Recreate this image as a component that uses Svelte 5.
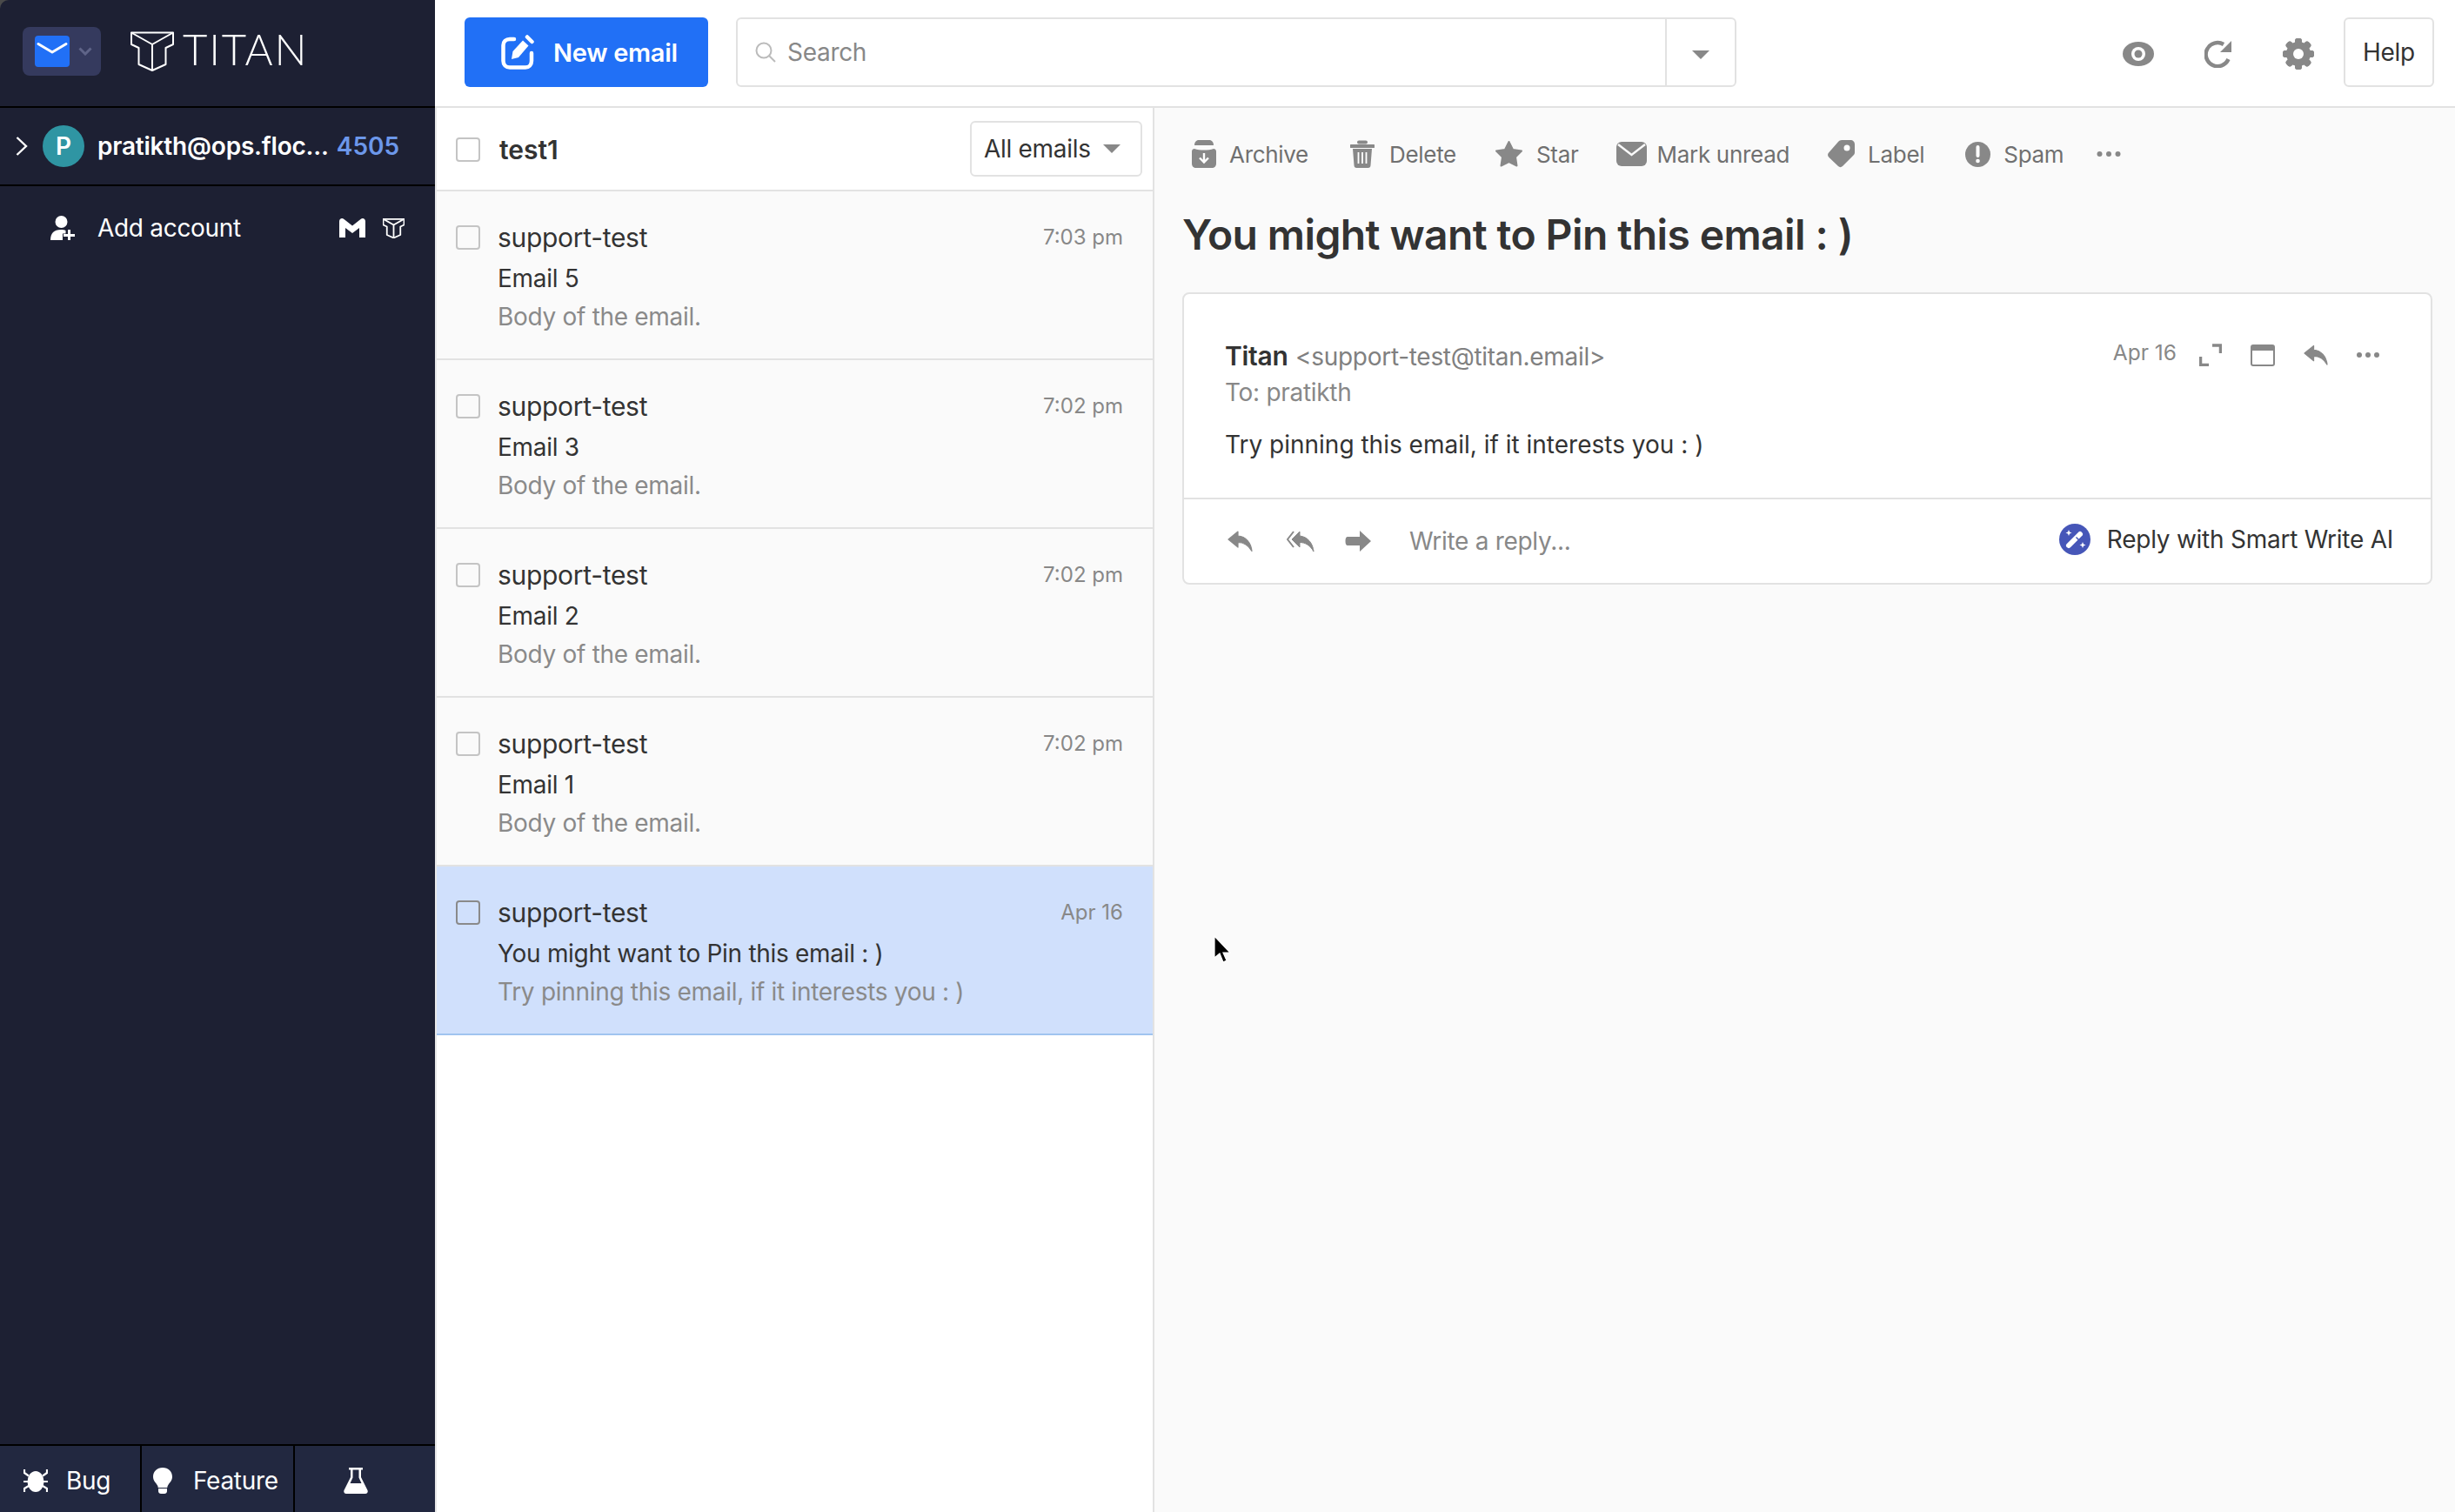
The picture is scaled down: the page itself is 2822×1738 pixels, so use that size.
<script>
  const emails = [
    { sender: 'support-test', subject: 'Email 5', body: 'Body of the email.', time: '7:03 pm' },
    { sender: 'support-test', subject: 'Email 3', body: 'Body of the email.', time: '7:02 pm' },
    { sender: 'support-test', subject: 'Email 2', body: 'Body of the email.', time: '7:02 pm' },
    { sender: 'support-test', subject: 'Email 1', body: 'Body of the email.', time: '7:02 pm' },
    { sender: 'support-test', subject: 'You might want to Pin this email : )', body: 'Try pinning this email, if it interests you : )', time: 'Apr 16', selected: true }
  ];
  const teeth = [0, 45, 90, 135, 180, 225, 270, 315];
</script>

{#snippet logo(w, h, sw)}
  <svg width={w} height={h} viewBox="0 0 50 46" fill="none" stroke="#fff" stroke-width={sw} stroke-linejoin="round">
    <path d="M1 1.5V15l8.5 4v19L25 45l15.500-7V19L49 15V1.500Z" />
    <path d="M1 1.500 25 15 49 1.500M25 15v30" />
  </svg>
{/snippet}

{#snippet reply(w, h)}
  <svg width={w} height={h} viewBox="0 0 29 24" fill="#888" stroke="#888" stroke-width="1.200" stroke-linejoin="round"><path d="M12 1 1 10l11 9v-5.500c7 0 12 3 16 10C27 14 21 6.500 12 6Z" /></svg>
{/snippet}

<div class="app">
  <aside class="sidebar">
    <div class="brand">
      <div class="switcher">
        <svg class="mailtile" width="40" height="36" viewBox="0 0 40 36"><rect width="40" height="36" rx="4" fill="#2170f6" /><path d="M4 9.500 20 19 36 9.500" fill="none" stroke="#fff" stroke-width="3" stroke-linecap="round" stroke-linejoin="round" /></svg>
        <svg width="16" height="10" viewBox="0 0 16 10"><path d="M1.500 1.500 8 8l6.500-6.500" fill="none" stroke="#5f6488" stroke-width="3" /></svg>
      </div>
      <div class="logo">
        {@render logo(50, 46, 2)}
        <span class="wordmark">TITAN</span>
      </div>
    </div>
    <div class="account">
      <svg width="14" height="22" viewBox="0 0 14 22"><path d="M1.500 1 12 11 1.500 21" fill="none" stroke="#fff" stroke-width="2.400" /></svg>
      <span class="avatar">P</span>
      <span class="address">pratikth@ops.floc...</span>
      <span class="count">4505</span>
    </div>
    <div class="add">
      <svg width="28" height="28" viewBox="0 0 28 28" fill="#fff"><circle cx="12.500" cy="7" r="7" /><path d="M0 28c0-8 4-12 12-12 2.500 0 4 .4 5.500 1v3.500H14V28Z" /><path d="M20 16h3v5h5v3h-5v4h-3v-4h-5v-3h5Z" /></svg>
      <span class="add-label">Add account</span>
      <svg width="30" height="22" viewBox="0 0 30 22"><path d="M0 3.500C0 .5 3-1 5.500 1L15 8.500 24.500 1C27-1 30 .5 30 3.500V22h-7V11l-8 6-8-6v11H0Z" fill="#fff" /></svg>
      {@render logo(25, 23, 3.600)}
    </div>
    <div class="grow"></div>
    <div class="feedback">
      <div class="fb fb-bug">
        <svg width="28" height="28" viewBox="0 0 28 28" fill="#fff"><ellipse cx="14" cy="15" rx="9.500" ry="12" /><path d="M1 1v4l5 3.500M27 1v4l-5 3.500M0 15h5M28 15h-5M1 27v-4l5-3M27 27v-4l-5-3" fill="none" stroke="#fff" stroke-width="2.200" /></svg>
        <span>Bug</span>
      </div>
      <div class="fb fb-feature">
        <svg width="22" height="30" viewBox="0 0 22 30" fill="#fff"><path d="M11 0C4.500 0 0 4.500 0 10.500 0 15 3 17 5 20.500c.5 1 .7 1.500.7 2.500h10.600c0-1 .2-1.500.7-2.500 2-3.500 5-5.500 5-10C22 4.500 17.500 0 11 0Z" /><path d="M6 24h10v3c0 2-1.500 3-3 3H9c-1.500 0-3-1-3-3Z" /></svg>
        <span>Feature</span>
      </div>
      <div class="fb fb-flask">
        <svg width="28" height="30" viewBox="0 0 28 30" fill="#fff"><path d="M6 0h16v2.500h-2V11l7.500 15c.8 2-.3 4-2.500 4H3c-2.200 0-3.300-2-2.500-4L8 11V2.500H6Zm4.500 2.500V11.500L7.500 18h13l-3-6.500v-9Z" fill-rule="evenodd" /></svg>
      </div>
    </div>
  </aside>

  <div class="main">
    <header class="topbar">
      <button class="compose">
        <svg width="40" height="40" viewBox="0 0 40 40" fill="none"><path d="M15 5H10C5.500 5 2.500 8 2.500 12v18c0 4.500 3 7.500 7.500 7.500h18c4 0 7-3 7-7.500v-9" stroke="#fff" stroke-width="4.500" stroke-linecap="round" /><path d="M12 28l1.500-9L25 6.500l6.500 6L20 26Z" fill="#fff" /><path d="M30 2.500 35.500 8" stroke="#fff" stroke-width="4.500" stroke-linecap="round" /></svg>
        <span>New email</span>
      </button>
      <div class="search">
        <svg width="24" height="24" viewBox="0 0 24 24" fill="none" stroke="#bbb" stroke-width="2"><circle cx="10" cy="10" r="8.500" /><path d="M16 16l7 7" /></svg>
        <span class="search-text">Search</span>
        <span class="search-caret"><i class="caret"></i></span>
      </div>
      <div class="tools">
        <svg class="tool" width="36" height="28" viewBox="0 0 36 28"><ellipse cx="18" cy="14" rx="18" ry="14" fill="#888" /><circle cx="18" cy="14" r="8" fill="#fff" /><circle cx="18" cy="14" r="4.500" fill="#888" /></svg>
        <svg class="tool" width="32" height="32" viewBox="0 0 32 32"><path d="M27.500 22A13.500 13.500 0 1 1 22 5" fill="none" stroke="#888" stroke-width="4.500" /><path d="M31 1v13H18Z" fill="#888" /></svg>
        <svg class="tool" width="36" height="36" viewBox="0 0 36 36"><g fill="#888">{#each teeth as t}<rect x="14" y="0" width="8" height="36" rx="3" transform="rotate({t} 18 18)" />{/each}<circle cx="18" cy="18" r="14" /></g><circle cx="18" cy="18" r="6" fill="#fff" /></svg>
        <button class="help">Help</button>
      </div>
    </header>

    <div class="content">
      <section class="list">
        <div class="list-head">
          <span class="check"></span>
          <span class="folder">test1</span>
          <button class="filter">All emails <i class="caret"></i></button>
        </div>
        {#each emails as m}
          <div class="row" class:selected={m.selected}>
            <span class="check"></span>
            <div class="row-text">
              <div class="sender">{m.sender}</div>
              <div class="subject">{m.subject}</div>
              <div class="snippet">{m.body}</div>
            </div>
            <span class="time">{m.time}</span>
          </div>
        {/each}
      </section>

      <section class="pane">
        <div class="actions">
          <span class="act act-archive">
            <svg width="28" height="32" viewBox="0 0 28 32" fill="#888"><path d="M3 6C3 2.500 5 0 8 0h12c3 0 5 2.500 5 6Z" /><path d="M0 13c0-2 1.500-3 3-3 3 1 7 1.500 11 1.500S22 11 25 10c1.500 0 3 1 3 3v14c0 3-2 5-5 5H5c-3 0-5-2-5-5Z" /><path d="M14 15v10M9 20.500l5 5 5-5" fill="none" stroke="#fff" stroke-width="2.400" /></svg>
            Archive
          </span>
          <span class="act act-delete">
            <svg width="28" height="32" viewBox="0 0 28 32" fill="#888"><path d="M10 2.500h8M1 7h26" stroke="#888" stroke-width="4" stroke-linecap="round" /><path d="M3 10h22l-1.500 19c-.1 2-1 3-3 3h-13c-2 0-2.900-1-3-3Z" /><path d="M9.500 14v13M14 14v13M18.500 14v13" stroke="#fff" stroke-width="1.800" /></svg>
            Delete
          </span>
          <span class="act act-star">
            <svg width="33" height="32" viewBox="0 0 33 32" fill="#888" stroke="#888" stroke-width="2" stroke-linejoin="round"><path d="M16.500 2 21 11l10 1.500-7 7 1.500 10-9-4.500-9 4.500L9 19.500l-7-7L12 11Z" /></svg>
            Star
          </span>
          <span class="act act-mark">
            <svg width="35" height="28" viewBox="0 0 35 28"><rect width="35" height="28" rx="6" fill="#888" /><path d="M2 3 17.500 15 33 3" fill="none" stroke="#fafafa" stroke-width="2.500" /></svg>
            Mark unread
          </span>
          <span class="act act-label">
            <svg width="31" height="32" viewBox="0 0 31 32"><path d="M16 0h10c3 0 5 2 5 5v9c0 1.500-.5 2.500-1.500 3.500L17 30c-1.500 1.500-3.500 1.500-5 0L1.500 20c-2-2-2-4 0-6L12 2c1-1.300 2.500-2 4-2Z" fill="#888" /><circle cx="22" cy="9" r="3.500" fill="#fff" /></svg>
            Label
          </span>
          <span class="act">
            <svg width="29" height="29" viewBox="0 0 29 29"><circle cx="14.500" cy="14.500" r="14.500" fill="#888" /><path d="M14.500 6v10" stroke="#fff" stroke-width="4" stroke-linecap="round" /><circle cx="14.500" cy="22" r="2.300" fill="#fff" /></svg>
            Spam
          </span>
          <svg class="more" width="28" height="8" viewBox="0 0 28 8" fill="#888"><circle cx="3.500" cy="4" r="3" /><circle cx="14" cy="4" r="3" /><circle cx="24.500" cy="4" r="3" /></svg>
        </div>

        <h1 class="title">You might want to Pin this email : )</h1>

        <article class="card">
          <div class="message">
            <div>
              <div class="from"><b>Titan</b> <span>&lt;support-test@titan.email&gt;</span></div>
              <div class="to">To: pratikth</div>
              <div class="body">Try pinning this email, if it interests you : )</div>
            </div>
            <div class="meta">
              <span class="date">Apr 16</span>
              <svg width="26" height="26" viewBox="0 0 26 26" fill="none" stroke="#888" stroke-width="3.500"><path d="M15 2h9.500v9M1.500 15v9.500H11" /></svg>
              <svg width="28" height="25" viewBox="0 0 28 25"><rect x="1" y="1" width="26" height="23" rx="2" fill="#fff" stroke="#888" stroke-width="2" /><rect x="1" y="1" width="26" height="6" fill="#888" /></svg>
              {@render reply(28, 24)}
              <svg width="26" height="8" viewBox="0 0 26 8" fill="#888"><circle cx="3" cy="4" r="3" /><circle cx="13" cy="4" r="3" /><circle cx="23" cy="4" r="3" /></svg>
            </div>
          </div>
          <div class="reply-bar">
            <span class="r-first">{@render reply(29, 24)}</span>
            <svg width="33" height="24" viewBox="0 0 33 24"><path d="M8 1 1 10l7 9" fill="none" stroke="#888" stroke-width="2" /><path d="M15 1 6 10l9 9v-5.500c6 0 12 3 16 10.500-1-10-7-17-16-18Z" fill="#888" stroke="#888" stroke-linejoin="round" /></svg>
            <svg width="31" height="26" viewBox="0 0 31 26"><path d="M17 1 30 13 17 25v-7H3c-1.500 0-2.500-1.500-2.500-5S1.500 8 3 8h14Z" fill="#888" /></svg>
            <span class="write">Write a reply...</span>
            <span class="ai">
              <svg width="36" height="36" viewBox="0 0 36 36"><circle cx="18" cy="18" r="18" fill="#4656b8" /><path d="M11 25 24 12" stroke="#fff" stroke-width="6" stroke-linecap="round" /><path d="M19.500 15.500l3 3" stroke="#4656b8" stroke-width="1.500" /><path d="M11 7l1 2.500 2.500 1-2.500 1-1 2.500-1-2.500-2.500-1 2.500-1ZM27 21l1 2.500 2.500 1-2.500 1-1 2.500-1-2.500-2.500-1 2.500-1Z" fill="#fff" /></svg>
              Reply with Smart Write AI
            </span>
          </div>
        </article>

        <svg class="cursor" width="20" height="32" viewBox="0 0 20 32"><path d="M1 1v25l6-5 4 10 4-2-4-9h8Z" fill="#000" stroke="#fff" stroke-width="1.200" /></svg>
      </section>
    </div>
  </div>
</div>

<style>
  :global(body) {
    margin: 0;
    background: #4a4a4a;
    font-family: Inter, "Liberation Sans", sans-serif;
    color: #333;
    letter-spacing: -0.3px;
  }
  button { font: inherit; color: inherit; letter-spacing: inherit; }
  .app {
    display: grid;
    grid-template-columns: 500px 1fr;
    height: 100vh;
    overflow: hidden;
  }
  .sidebar {
    display: flex;
    flex-direction: column;
    background: #1d2033;
    color: #fff;
    border-radius: 10px 0 0 10px;
    font-size: 28px;
  }
  .brand {
    height: 122px;
    box-sizing: border-box;
    display: flex;
    align-items: flex-start;
    padding: 31px 0 0 26px;
  }
  .switcher {
    width: 90px;
    height: 56px;
    border-radius: 8px;
    background: #353a5e;
    display: flex;
    align-items: center;
    box-sizing: border-box;
    padding-left: 14px;
    gap: 10px;
  }
  .logo { display: flex; margin: 5px 0 0 34px; gap: 10px; }
  .wordmark {
    font-family: Lato, sans-serif;
    font-weight: 300;
    font-size: 49px;
    line-height: 36px;
    margin-top: 2px;
    letter-spacing: 1.800px;
  }
  .account {
    height: 88px;
    border-top: 2px solid #000;
    border-bottom: 2px solid #000;
    display: flex;
    align-items: center;
    padding-left: 18px;
  }
  .avatar {
    width: 48px;
    height: 48px;
    border-radius: 50%;
    background: #2f95a3;
    display: flex;
    align-items: center;
    justify-content: center;
    font-weight: 600;
    margin-left: 17px;
  }
  .address { font-weight: 600; margin-left: 15px; white-space: nowrap; letter-spacing: -0.200px; }
  .count { font-weight: 600; color: #6c97ea; margin-left: 9px; letter-spacing: 0; }
  .add {
    display: flex;
    align-items: center;
    height: 70px;
    margin-top: 13px;
    padding-left: 58px;
  }
  .add-label { margin-left: 26px; margin-right: 113px; }
  .add svg:last-child { margin-left: 20px; }
  .grow { flex: 1; }
  .feedback {
    height: 76px;
    display: grid;
    grid-template-columns: 163px 176px 1fr;
    background: #222840;
    border-top: 2px solid #000;
  }
  .fb { display: flex; align-items: center; padding-top: 3px; }
  .fb-bug { padding-left: 27px; gap: 21px; border-right: 2px solid #000; }
  .fb-feature { padding-left: 13px; gap: 24px; border-right: 2px solid #000; }
  .fb-flask { justify-content: center; padding-right: 22px; }

  .main { display: flex; flex-direction: column; min-width: 0; background: #fff; }
  .topbar {
    height: 124px;
    box-sizing: border-box;
    flex: none;
    border-bottom: 2px solid #e2e2e2;
    display: flex;
    align-items: flex-start;
    padding: 20px 24px 0 34px;
  }
  .compose {
    width: 280px;
    height: 80px;
    border: 0;
    border-radius: 6px;
    background: #2170f6;
    color: #fff;
    font-weight: 600;
    font-size: 29px;
    display: flex;
    align-items: center;
    padding: 0 0 0 42px;
    gap: 20px;
  }
  .search {
    width: 1150px;
    height: 80px;
    margin-left: 32px;
    box-sizing: border-box;
    border: 2px solid #e2e2e2;
    border-radius: 6px;
    display: flex;
    align-items: center;
    padding-left: 20px;
    font-size: 28px;
    color: #888;
  }
  .search-text { margin-left: 13px; flex: 1; }
  .search-caret {
    width: 80px;
    height: 100%;
    border-left: 2px solid #e2e2e2;
    display: flex;
    align-items: center;
    justify-content: center;
    padding-top: 5px;
    box-sizing: border-box;
  }
  .caret {
    display: inline-block;
    width: 0;
    height: 0;
    border-left: 10px solid transparent;
    border-right: 10px solid transparent;
    border-top: 10px solid #888;
  }
  .tools {
    flex: 1;
    display: flex;
    align-items: center;
    justify-content: flex-end;
    height: 80px;
    gap: 58px;
  }
  .tool { margin-top: 4px; }
  .help {
    width: 104px;
    height: 80px;
    margin-left: -24px;
    background: #fff;
    border: 2px solid #e2e2e2;
    border-radius: 6px;
    font-size: 28px;
    padding: 0;
  }

  .content { flex: 1; display: grid; grid-template-columns: 827px 1fr; min-height: 0; }
  .list {
    border-left: 2px solid #e8e8e8;
    border-right: 2px solid #e2e2e2;
    background: #fff;
    font-size: 28px;
  }
  .list-head {
    height: 94px;
    box-sizing: border-box;
    padding: 2px 12px 0 22px;
    border-bottom: 2px solid #e2e2e2;
    display: flex;
    align-items: center;
    height: 96px;
  }
  .check {
    width: 28px;
    height: 28px;
    flex: none;
    box-sizing: border-box;
    border: 2px solid #c4c4c4;
    border-radius: 4px;
  }
  .folder { font-weight: 600; font-size: 30px; margin-left: 22px; flex: 1; letter-spacing: 0; }
  .filter {
    width: 198px;
    height: 64px;
    margin-top: -2px;
    background: #fff;
    border: 2px solid #e2e2e2;
    border-radius: 6px;
    font-size: 28px;
    display: flex;
    align-items: center;
    padding: 0 0 0 14px;
    gap: 14px;
  }
  .row {
    height: 159px;
    background: #fafafa;
    border-bottom: 2px solid #e2e2e2;
    display: grid;
    grid-template-columns: 28px 1fr auto;
    column-gap: 20px;
    padding: 33px 34px 0 22px;
  }
  .row .check { margin-top: 6px; }
  .sender, .subject, .snippet { line-height: 40px; white-space: nowrap; }
  .sender { font-size: 30px; }
  .subject { margin-top: 7px; }
  .snippet { margin-top: 4px; color: #8a8a8a; }
  .time { font-size: 24px; line-height: 40px; color: #888; letter-spacing: 0; margin-left: -2px; }
  .row.selected { background: #d0e0fc; border-bottom-color: #a0c4f0; }
  .selected .check { border-color: #8a8a8a; }

  .pane { position: relative; background: #fafafa; padding: 0 26px 0 32px; font-size: 28px; }
  .actions {
    height: 106px;
    display: flex;
    align-items: center;
    padding-left: 11px;
    gap: 44px;
    color: #707070;
    font-size: 26px;
  }
  .act { display: flex; align-items: center; gap: 15px; }
  .act-archive { margin-right: 4px; }
  .act-delete { gap: 17px; }
  .act-star { margin-right: -1px; }
  .act-mark { gap: 12px; }
  .act-label { margin-right: 3px; }
  .more { margin-left: -6px; }
  .title {
    margin: 10px 0 36px;
    font-size: 48px;
    line-height: 60px;
    font-weight: 600;
    color: #333;
    letter-spacing: -0.600px;
  }
  .card {
    background: #fff;
    border: 2px solid #e2e2e2;
    border-radius: 8px;
  }
  .message {
    height: 183px;
    padding: 51px 59px 0 47px;
    display: flex;
    justify-content: space-between;
    border-bottom: 2px solid #e2e2e2;
  }
  .from { line-height: 40px; font-size: 28px; white-space: nowrap; }
  .from b { font-weight: 600; font-size: 30px; color: #333; }
  .from span { color: #808080; margin-left: 1px; }
  .to { margin-top: 1px; line-height: 40px; font-size: 28px; color: #888; }
  .body { margin-top: 20px; line-height: 40px; color: #333; letter-spacing: 0; }
  .meta {
    display: flex;
    align-items: center;
    height: 40px;
    margin-top: -1px;
    gap: 33px;
    letter-spacing: 0;
  }
  .date { font-size: 24.500px; color: #888; margin-right: -7px; margin-top: -6px; }
  .reply-bar {
    height: 96px;
    display: flex;
    align-items: center;
    padding: 0 43px 0 50px;
    gap: 34px;
  }
  .r-first { display: flex; margin-right: 5px; }
  .write { color: #888; margin-left: 9px; flex: 1; }
  .ai { display: flex; align-items: center; gap: 19px; margin-top: -4px; color: #333; letter-spacing: -0.250px; }
  .cursor { position: absolute; left: 68px; top: 951px; }
</style>
